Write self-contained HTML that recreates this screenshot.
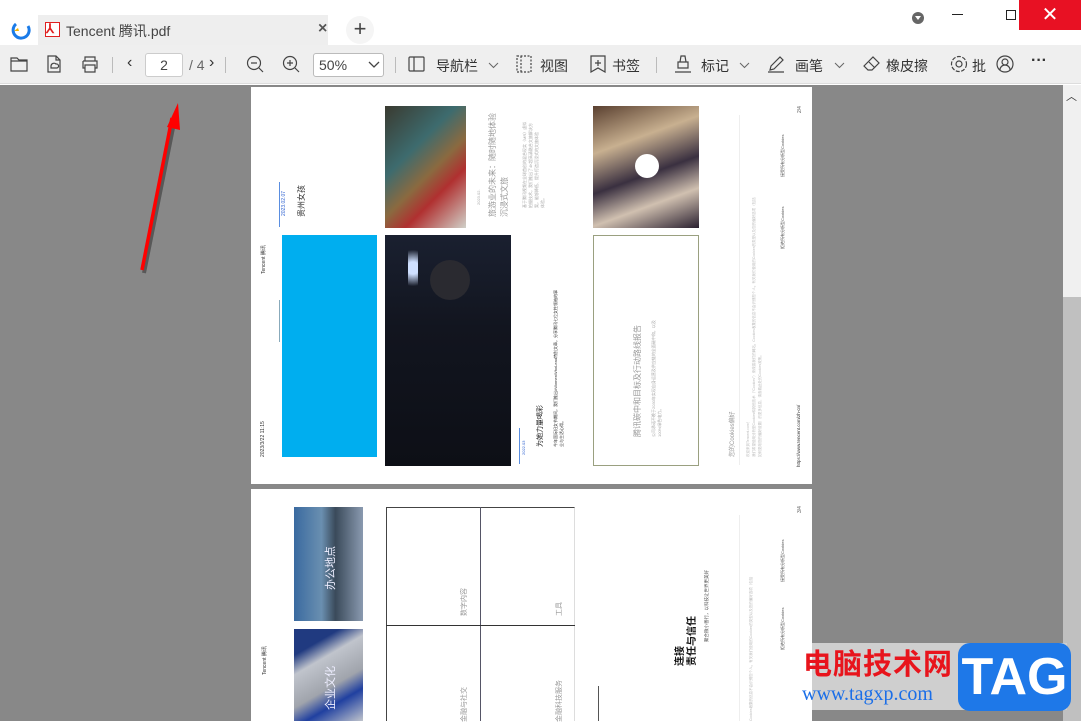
<!DOCTYPE html>
<html><head><meta charset="utf-8"><style>
*{margin:0;padding:0;box-sizing:border-box}
body{width:1081px;height:721px;overflow:hidden;background:#fff;font-family:"Liberation Sans","Noto Sans CJK SC",sans-serif;position:relative}
.a{position:absolute}
.v{position:absolute;writing-mode:vertical-rl;text-orientation:sideways;white-space:nowrap;transform:rotate(180deg);overflow:visible}
.tb{font-size:14px;color:#333}
.ic{position:absolute;top:55px}
</style></head><body>
<!-- title bar -->
<svg class="a" style="left:10px;top:20px" width="22" height="20" viewBox="0 0 22 20"><path d="M6 4 A8 8 0 1 0 18 6" fill="none" stroke="#1a7be8" stroke-width="3"/><path d="M4 11 l4 -3 l1 3z" fill="#f4b400"/></svg>
<div class="a" style="left:38px;top:15px;width:290px;height:30px;background:#eeeeee"></div>
<div class="a" style="left:45px;top:22px;width:15px;height:15px;border:1px solid #e02020;background:#fff"></div>
<div class="a" style="left:46px;top:21px;font-size:13px;color:#e02020;font-weight:bold">⅄</div>
<div class="a" style="left:66px;top:21px;font-size:14px;color:#444">Tencent 腾讯.pdf</div>
<div class="a" style="left:318px;top:20px;font-size:16px;color:#555;font-weight:bold">×</div>
<div class="a" style="left:346px;top:16px;width:28px;height:28px;border-radius:14px;background:#f5f5f5;font-size:22px;line-height:26px;text-align:center;color:#444">+</div>
<div class="a" style="left:912px;top:12px;width:12px;height:12px;border-radius:6px;background:#666"></div>
<div class="a" style="left:915px;top:16px;width:0;height:0;border-left:3px solid transparent;border-right:3px solid transparent;border-top:4px solid #fff"></div>
<div class="a" style="left:952px;top:14px;width:11px;height:1px;background:#222"></div>
<div class="a" style="left:1006px;top:10px;width:10px;height:10px;border:1px solid #222"></div>
<div class="a" style="left:1019px;top:0;width:62px;height:30px;background:#e81123;color:#fff;font-size:20px;text-align:center;line-height:30px">✕</div>
<!-- toolbar -->
<div class="a" style="left:0;top:45px;width:1081px;height:39px;background:#efefef;border-bottom:1px solid #ddd"></div>
<svg class="ic" style="left:10px" width="18" height="18" viewBox="0 0 18 18" fill="none" stroke="#444" stroke-width="1.2"><path d="M1 3h6l2 2h8v11H1z M1 6h16"/></svg>
<svg class="ic" style="left:46px" width="16" height="18" viewBox="0 0 16 18" fill="none" stroke="#444" stroke-width="1.2"><path d="M2 1h8l4 4v12H2z M10 1v4h4 M5 13h6 a2 2 0 0 0-1-4 a3 3 0 0 0-5 2z"/></svg>
<svg class="ic" style="left:81px" width="18" height="18" viewBox="0 0 18 18" fill="none" stroke="#444" stroke-width="1.2"><path d="M4 6V2h10v4 M2 6h14v7h-2 M4 13H2V6 M4 10h10v7H4z"/></svg>
<div class="a" style="left:112px;top:57px;width:1px;height:16px;background:#bbb"></div>
<div class="a tb" style="left:127px;top:54px;font-size:16px">‹</div>
<div class="a" style="left:145px;top:53px;width:38px;height:24px;background:#fff;border:1px solid #ccc;border-radius:3px;text-align:center;font-size:14px;line-height:22px;color:#444">2</div>
<div class="a tb" style="left:189px;top:57px;color:#666">/ 4</div>
<div class="a tb" style="left:209px;top:54px;font-size:16px">›</div>
<div class="a" style="left:225px;top:57px;width:1px;height:16px;background:#bbb"></div>
<svg class="ic" style="left:246px" width="18" height="18" viewBox="0 0 18 18" fill="none" stroke="#444" stroke-width="1.2"><circle cx="8" cy="8" r="6.5"/><path d="M5 8h6 M13 13l4 4"/></svg>
<svg class="ic" style="left:282px" width="18" height="18" viewBox="0 0 18 18" fill="none" stroke="#444" stroke-width="1.2"><circle cx="8" cy="8" r="6.5"/><path d="M5 8h6 M8 5v6 M13 13l4 4"/></svg>
<div class="a" style="left:313px;top:53px;width:71px;height:24px;background:#fff;border:1px solid #bbb;border-radius:3px;font-size:14px;line-height:22px;padding-left:5px;color:#444">50%</div>
<svg class="a" style="left:368px;top:61px" width="12" height="8"><path d="M1 1l5 5 5-5" fill="none" stroke="#444" stroke-width="1.3"/></svg>
<div class="a" style="left:395px;top:57px;width:1px;height:16px;background:#bbb"></div>
<svg class="ic" style="left:408px" width="18" height="18" viewBox="0 0 18 18" fill="none" stroke="#444" stroke-width="1.2"><rect x="1" y="2" width="15" height="14" rx="1"/><path d="M6 2v14"/></svg>
<div class="a tb" style="left:436px;top:56px">导航栏</div>
<svg class="a" style="left:488px;top:62px" width="11" height="7"><path d="M1 1l4.5 4.5 4.5-4.5" fill="none" stroke="#666"/></svg>
<svg class="ic" style="left:516px" width="17" height="18" viewBox="0 0 17 18" fill="none" stroke="#444" stroke-width="1.2"><path d="M1 1h14v16H1z M5 1v16" stroke-dasharray="2 1.5"/></svg>
<div class="a tb" style="left:540px;top:56px">视图</div>
<svg class="ic" style="left:590px" width="16" height="18" viewBox="0 0 16 18" fill="none" stroke="#444" stroke-width="1.2"><path d="M1 1h14v16l-7-4-7 4z M8 5v6 M5 8h6"/></svg>
<div class="a tb" style="left:612px;top:56px">书签</div>
<div class="a" style="left:656px;top:57px;width:1px;height:16px;background:#bbb"></div>
<svg class="ic" style="left:674px" width="18" height="18" viewBox="0 0 18 18" fill="none" stroke="#444" stroke-width="1.2"><path d="M7 1h4l1 6h-6z M4 7h10v6H4z M1 17h16"/></svg>
<div class="a tb" style="left:701px;top:56px">标记</div>
<svg class="a" style="left:739px;top:62px" width="11" height="7"><path d="M1 1l4.5 4.5 4.5-4.5" fill="none" stroke="#666"/></svg>
<svg class="ic" style="left:767px" width="18" height="18" viewBox="0 0 18 18" fill="none" stroke="#444" stroke-width="1.2"><path d="M3 15l1-4 9-9 3 3-9 9z M1 17h16"/></svg>
<div class="a tb" style="left:795px;top:56px">画笔</div>
<svg class="a" style="left:834px;top:62px" width="11" height="7"><path d="M1 1l4.5 4.5 4.5-4.5" fill="none" stroke="#666"/></svg>
<svg class="ic" style="left:863px" width="18" height="18" viewBox="0 0 18 18" fill="none" stroke="#444" stroke-width="1.2"><path d="M1 11l9-9 6 6-7 7H5z M6 7l6 6"/></svg>
<div class="a tb" style="left:886px;top:56px">橡皮擦</div>
<svg class="ic" style="left:950px" width="18" height="18" viewBox="0 0 18 18" fill="none" stroke="#444" stroke-width="1.2"><circle cx="9" cy="9" r="3"/><circle cx="9" cy="9" r="7.5" stroke-dasharray="4 1.5"/></svg>
<div class="a tb" style="left:972px;top:56px">批</div>
<svg class="ic" style="left:996px" width="18" height="18" viewBox="0 0 18 18" fill="none" stroke="#444" stroke-width="1.2"><circle cx="9" cy="9" r="8"/><circle cx="9" cy="7" r="3"/><path d="M4 15a5 5 0 0 1 10 0"/></svg>
<div class="a tb" style="left:1031px;top:52px;font-size:16px;font-weight:bold">···</div>
<!-- viewer -->
<div class="a" style="left:0;top:85px;width:1063px;height:636px;background:#888"></div>
<div class="a" style="left:1063px;top:85px;width:18px;height:636px;background:#f0f0f0"></div>
<div class="a" style="left:1063px;top:297px;width:18px;height:424px;background:#c0c0c0"></div>
<div class="a" style="left:1066px;top:88px;font-size:11px;color:#333">︿</div>
<!-- page 1 -->
<div class="a" style="left:251px;top:87px;width:561px;height:397px;background:#fff"></div>
<div class="v" style="left:260px;top:230px;height:44px;font-size:5px;color:#333">Tencent 腾讯</div>
<div class="v" style="left:260px;top:420px;height:37px;font-size:5px;color:#333">2023/3/22 11:15</div>
<div class="a" style="left:282px;top:235px;width:95px;height:222px;background:#00aeef"></div>
<div class="a" style="left:279px;top:182px;width:5px;height:45px;border-left:1px solid #5a8ee0"></div>
<div class="v" style="left:281px;top:180px;height:36px;font-size:5px;color:#2a5fd0">2023.02.07</div>
<div class="v" style="left:296px;top:180px;height:37px;font-size:8px;color:#333">贵州女孩</div>
<div class="a" style="left:279px;top:300px;width:1px;height:42px;background:#8ab"></div>
<div class="a" style="left:385px;top:106px;width:81px;height:122px;background:linear-gradient(135deg,#3a3a30,#3d6b6e 35%,#8a6a40 55%,#b03030 70%,#d0d0c8)"></div>
<div class="a" style="left:385px;top:235px;width:126px;height:231px;background:linear-gradient(180deg,#1a2030,#12151f 40%,#0d0f16)"></div>
<div class="a" style="left:408px;top:238px;width:10px;height:60px;background:radial-gradient(circle,#cfe0ff 20%,transparent 60%)"></div>
<div class="a" style="left:430px;top:260px;width:40px;height:40px;border-radius:20px;background:#2a2a30"></div>
<div class="v" style="left:476px;top:190px;height:15px;font-size:4px;color:#aaa">2023.02.</div>
<div class="v" style="left:487px;top:100px;height:117px;font-size:8px;color:#999;line-height:12px">旅游业的未来：随时随地体验<br>沉浸式文旅</div>
<div class="v" style="left:522px;top:100px;height:108px;font-size:4px;color:#aaa;line-height:6px">基于腾讯视频在全球首创的混合现实（MR）虚拟<br>拍摄技术，我们推出了4K超高清融合文旅解决方<br>案，能够降低、提升打造沉浸式的文旅体验<br>体验。</div>
<div class="a" style="left:519px;top:428px;width:8px;height:36px;border-left:1px solid #5a8ee0"></div>
<div class="v" style="left:521px;top:430px;height:25px;font-size:4px;color:#2a5fd0">2022.03</div>
<div class="v" style="left:535px;top:400px;height:47px;font-size:7px;color:#222">为她力量喝彩</div>
<div class="v" style="left:553px;top:240px;height:207px;font-size:4px;color:#333;line-height:6px">今年国际妇女节期间，我们推出#WomenWhoLead特别文章，分享腾讯七位女性领袖的事<br>业与生活心得。</div>
<div class="a" style="left:593px;top:106px;width:106px;height:122px;background:linear-gradient(160deg,#5a4030,#c8b090 30%,#3a3040 55%,#d0c0b0 75%,#2a2030)"></div>
<div class="a" style="left:635px;top:154px;width:24px;height:24px;border-radius:12px;background:#fff"></div>
<div class="a" style="left:593px;top:235px;width:106px;height:231px;border:1px solid #9aa080"></div>
<div class="v" style="left:632px;top:300px;height:137px;font-size:8px;color:#999">腾讯碳中和目标及行动路线报告</div>
<div class="v" style="left:651px;top:270px;height:167px;font-size:4px;color:#aaa;line-height:6px">公司承诺不晚于2030年实现自身运营及供应链的全面碳中和，以及<br>100%绿色电力。</div>
<div class="a" style="left:739px;top:115px;width:1px;height:350px;background:#eee"></div>
<div class="v" style="left:727px;top:395px;height:62px;font-size:6px;color:#999">您的Cookies偏好</div>
<div class="v" style="left:745px;top:110px;height:347px;font-size:3.5px;color:#bbb;line-height:6px">欢迎来到Tencent.com！<br>我们希望使用分析型Cookies和其他技术（"Cookies"）来改善我们的网站。Cookies收集的信息不会识别您个人。有关我们使用的Cookies的类型以及您的偏好选项（包括<br>如何更改您的偏好设置）的更多信息，请查看此处的Cookies政策。</div>
<div class="v" style="left:780px;top:120px;height:57px;font-size:4px;color:#555">接受所有分析型Cookies</div>
<div class="v" style="left:780px;top:192px;height:57px;font-size:4px;color:#555">拒绝所有分析型Cookies</div>
<div class="v" style="left:797px;top:100px;height:13px;font-size:5px;color:#555">2/4</div>
<div class="v" style="left:796px;top:380px;height:87px;font-size:4.5px;color:#333">https://www.tencent.com/zh-cn/</div>
<!-- page 2 -->
<div class="a" style="left:251px;top:489px;width:561px;height:232px;background:#fff"></div>
<div class="v" style="left:261px;top:640px;height:35px;font-size:5px;color:#333">Tencent 腾讯</div>
<div class="a" style="left:294px;top:507px;width:69px;height:114px;background:linear-gradient(90deg,#3a6aa0,#6a8fb0 40%,#3a4a5a 60%,#8a9ab0)"></div>
<div class="v" style="left:322px;top:540px;height:50px;font-size:11px;color:#eef">办公地点</div>
<div class="a" style="left:294px;top:629px;width:69px;height:92px;background:linear-gradient(150deg,#203a80 20%,#c0c4cc 35%,#a0a4ac 60%,#2040a0 75%,#c0c4cc)"></div>
<div class="v" style="left:322px;top:660px;height:50px;font-size:11px;color:#eef">企业文化</div>
<div class="a" style="left:386px;top:507px;width:189px;height:214px;border:1px solid #444;border-right-color:#ddd;border-bottom:none"></div>
<div class="a" style="left:480px;top:507px;width:1px;height:214px;background:#556"></div>
<div class="a" style="left:386px;top:625px;width:189px;height:1px;background:#333"></div>
<div class="v" style="left:459px;top:580px;height:36px;font-size:7px;color:#999">数字内容</div>
<div class="v" style="left:554px;top:595px;height:21px;font-size:7px;color:#999">工具</div>
<div class="v" style="left:459px;top:680px;height:42px;font-size:7px;color:#999">金融与社交</div>
<div class="v" style="left:554px;top:680px;height:42px;font-size:7px;color:#999">金融科技服务</div>
<div class="a" style="left:598px;top:686px;width:1px;height:35px;background:#555"></div>
<div class="v" style="left:675px;top:600px;height:66px;font-size:10px;color:#111;font-weight:bold;line-height:12px">连接<br>责任与信任</div>
<div class="v" style="left:704px;top:560px;height:82px;font-size:4.5px;color:#555">聚合微小善行，以科技让世界更美好</div>
<div class="a" style="left:739px;top:515px;width:1px;height:206px;background:#eee"></div>
<div class="v" style="left:749px;top:515px;height:206px;font-size:3.5px;color:#bbb">Cookies收集的信息不会识别您个人。有关我们使用的Cookies的类型以及您的偏好选项（包括</div>
<div class="v" style="left:780px;top:525px;height:57px;font-size:4px;color:#555">接受所有分析型Cookies</div>
<div class="v" style="left:780px;top:593px;height:57px;font-size:4px;color:#555">拒绝所有分析型Cookies</div>
<div class="v" style="left:797px;top:500px;height:13px;font-size:5px;color:#555">3/4</div>
<!-- watermark -->
<div class="a" style="left:812px;top:643px;width:255px;height:67px;background:#cfcfcf"></div>
<div class="a" style="left:803px;top:644px;font-size:29px;font-weight:bold;color:#e8141c;font-family:'Noto Sans CJK SC',sans-serif;letter-spacing:1px;line-height:36px">电脑技术网</div>
<div class="a" style="left:802px;top:683px;font-size:20px;color:#1a6ee8;font-family:'Liberation Serif',serif">www.tagxp.com</div>
<div class="a" style="left:958px;top:643px;width:113px;height:68px;border-radius:12px;background:#1e78e8;color:#fff;font-size:52px;font-weight:bold;text-align:center;line-height:68px">TAG</div>
<!-- red arrow -->
<svg class="a" style="left:0;top:85px" width="260" height="200"><g transform="translate(2,3)" opacity="0.35"><path d="M142 185 L172 35" stroke="#000" stroke-width="4"/></g><path d="M142 185 L172 33" stroke="#ff0000" stroke-width="3.5" fill="none"/><path d="M178 18 L167 42 L180 45 Z" fill="#ff0000"/></svg>
</body></html>
